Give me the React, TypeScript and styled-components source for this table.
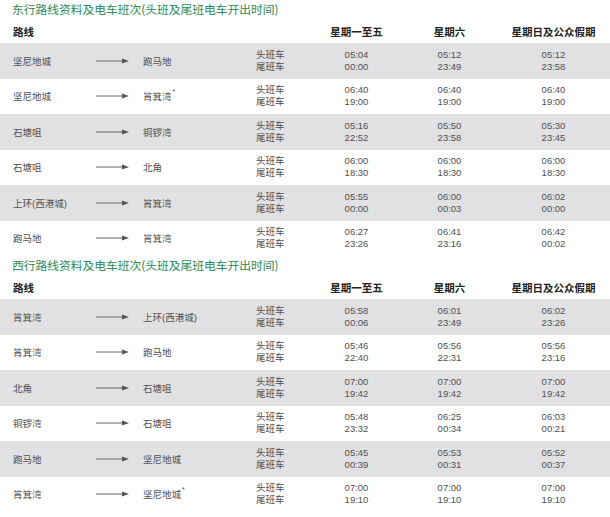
import React from "react";
import styled, { createGlobalStyle } from "styled-components";

const Global = createGlobalStyle`
  html, body { margin: 0; padding: 0; background: #fff; }
  body { font-family: "Liberation Sans", "Noto Sans CJK SC", Arial, sans-serif; }
`;

const Page = styled.div`
  width: 610px;
  display: flex;
  flex-direction: column;
`;

const Section = styled.section`
  display: flex;
  flex-direction: column;
`;

const Title = styled.h2`
  margin: 0;
  height: 20px;
  padding-left: 12px;
  font-size: 11.75px;
  line-height: 18px;
  font-weight: 400;
  color: #2a8a58;
  font-family: "Noto Sans CJK SC", "Liberation Sans", sans-serif;
  white-space: nowrap;
`;

const grid = `
  display: grid;
  grid-template-columns: 83px 47px 113px 60px 81px 105px 103px;
  padding: 0 5px 0 13px;
  align-items: center;
`;

const HeadRow = styled.div`
  ${grid}
  height: 23px;
  font-size: 10.5px;
  font-weight: 700;
  color: #222;
  font-family: "Noto Sans CJK SC", "Liberation Sans", sans-serif;
`;

const HeadCell = styled.div<{ $center?: boolean }>`
  text-align: ${(p) => (p.$center ? "center" : "left")};
  white-space: nowrap;
`;

const Row = styled.div<{ $shade: boolean }>`
  ${grid}
  height: 35.5px;
  background: ${(p) => (p.$shade ? "#e1e0e2" : "#fff")};
  color: #505050;
  font-size: 9.5px;
`;

const Place = styled.div`
  white-space: nowrap;
  font-family: "Liberation Sans", "Noto Sans CJK SC", sans-serif;
`;

const Star = styled.sup`
  font-size: 7px;
  vertical-align: top;
  position: relative;
  top: -1px;
  margin-left: 1px;
`;

const ArrowCell = styled.div`
  display: flex;
  align-items: center;
`;

const Pair = styled.div<{ $center?: boolean }>`
  display: flex;
  flex-direction: column;
  align-items: ${(p) => (p.$center ? "center" : "flex-start")};
  line-height: 12px;
  white-space: nowrap;
`;

const Arrow = () => (
  <svg width="33" height="6" viewBox="0 0 33 6">
    <line x1="0" y1="3" x2="27" y2="3" stroke="#666" strokeWidth="1" />
    <polygon points="26,0.5 33,3 26,5.5" fill="#555" />
  </svg>
);

type R = { from: string; to: string; star?: boolean; t: [string, string][] };

const east: R[] = [
  { from: "坚尼地城", to: "跑马地", t: [["05:04", "00:00"], ["05:12", "23:49"], ["05:12", "23:58"]] },
  { from: "坚尼地城", to: "筲箕湾", star: true, t: [["06:40", "19:00"], ["06:40", "19:00"], ["06:40", "19:00"]] },
  { from: "石塘咀", to: "铜锣湾", t: [["05:16", "22:52"], ["05:50", "23:58"], ["05:30", "23:45"]] },
  { from: "石塘咀", to: "北角", t: [["06:00", "18:30"], ["06:00", "18:30"], ["06:00", "18:30"]] },
  { from: "上环(西港城)", to: "筲箕湾", t: [["05:55", "00:00"], ["06:00", "00:03"], ["06:02", "00:00"]] },
  { from: "跑马地", to: "筲箕湾", t: [["06:27", "23:26"], ["06:41", "23:16"], ["06:42", "00:02"]] },
];

const west: R[] = [
  { from: "筲箕湾", to: "上环(西港城)", t: [["05:58", "00:06"], ["06:01", "23:49"], ["06:02", "23:26"]] },
  { from: "筲箕湾", to: "跑马地", t: [["05:46", "22:40"], ["05:56", "22:31"], ["05:56", "23:16"]] },
  { from: "北角", to: "石塘咀", t: [["07:00", "19:42"], ["07:00", "19:42"], ["07:00", "19:42"]] },
  { from: "铜锣湾", to: "石塘咀", t: [["05:48", "23:32"], ["06:25", "00:34"], ["06:03", "00:21"]] },
  { from: "跑马地", to: "坚尼地城", t: [["05:45", "00:39"], ["05:53", "00:31"], ["05:52", "00:37"]] },
  { from: "筲箕湾", to: "坚尼地城", star: true, t: [["07:00", "19:10"], ["07:00", "19:10"], ["07:00", "19:10"]] },
];

const Table = ({ title, rows }: { title: string; rows: R[] }) => (
  <Section>
    <Title>{title}</Title>
    <HeadRow>
      <HeadCell>路线</HeadCell>
      <HeadCell />
      <HeadCell />
      <HeadCell />
      <HeadCell $center>星期一至五</HeadCell>
      <HeadCell $center>星期六</HeadCell>
      <HeadCell $center>星期日及公众假期</HeadCell>
    </HeadRow>
    {rows.map((r, i) => (
      <Row key={i} $shade={i % 2 === 0}>
        <Place>{r.from}</Place>
        <ArrowCell>
          <Arrow />
        </ArrowCell>
        <Place>
          {r.to}
          {r.star && <Star>*</Star>}
        </Place>
        <Pair>
          <span>头班车</span>
          <span>尾班车</span>
        </Pair>
        {r.t.map((p, j) => (
          <Pair key={j} $center>
            <span>{p[0]}</span>
            <span>{p[1]}</span>
          </Pair>
        ))}
      </Row>
    ))}
  </Section>
);

export default function App() {
  return (
    <Page>
      <Global />
      <Table title="东行路线资料及电车班次(头班及尾班电车开出时间)" rows={east} />
      <Table title="西行路线资料及电车班次(头班及尾班电车开出时间)" rows={west} />
    </Page>
  );
}
